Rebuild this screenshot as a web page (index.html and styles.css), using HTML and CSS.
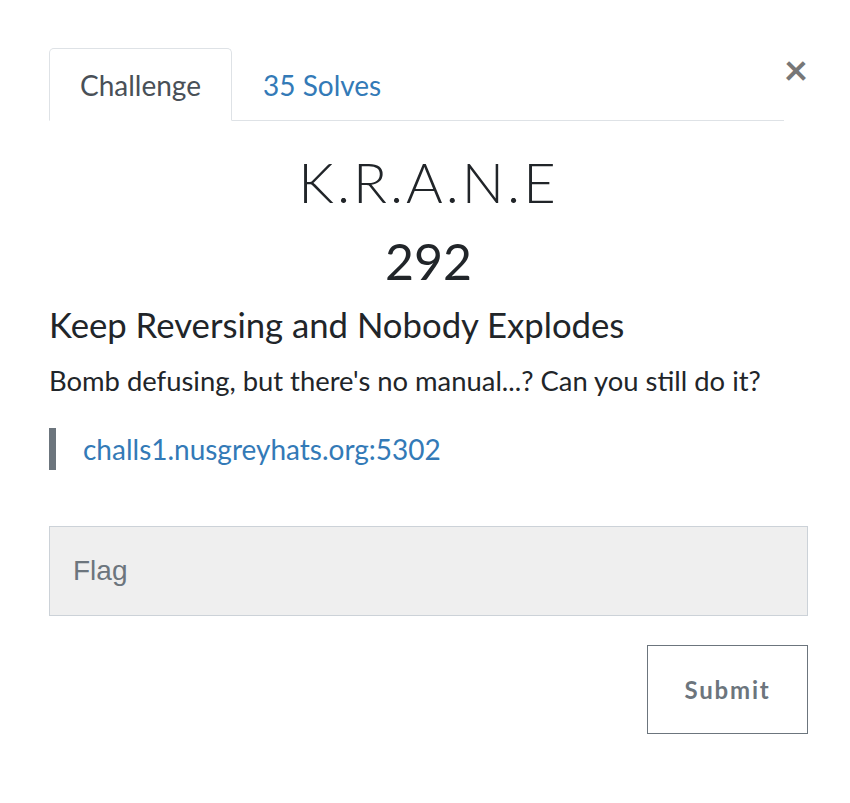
FILE: index.html
```html
<!DOCTYPE html>
<html>
<head>
<meta charset="utf-8">
<link rel="stylesheet" href="styles.css">
</head>
<body>
<div class="modal">
  <div class="tab-row">
    <ul class="tabs">
      <li class="tab active">Challenge</li>
      <li class="tab">35 Solves</li>
    </ul>
    <button class="close" aria-label="Close">&times;</button>
  </div>
  <div class="content">
    <h2 class="title">K.R.A.N.E</h2>
    <h3 class="points">292</h3>
    <h4 class="subtitle">Keep Reversing and Nobody Explodes</h4>
    <p class="desc">Bomb defusing, but there's no manual...? Can you still do it?</p>
    <blockquote class="quote"><a class="link" href="#">challs1.nusgreyhats.org:5302</a></blockquote>
    <input class="flag" type="text" placeholder="Flag">
    <div class="actions"><button class="submit">Submit</button></div>
  </div>
</div>
</body>
</html>
```
FILE: styles.css
```css
* { box-sizing: border-box; }
html, body { margin: 0; padding: 0; background: #fff; }
body { font-family: Lato, "Open Sans", sans-serif; color: #212529; }
.modal { padding: 48px 42px 0 49px; }
.tab-row { display: flex; align-items: flex-start; }
.tabs {
  list-style: none; margin: 0; padding: 0;
  display: flex; width: 735px;
  border-bottom: 1px solid #dee2e6;
}
.tab {
  font-size: 28px; line-height: 36px;
  padding: 18px 30px 17px;
  color: #337ab7;
  border: 1px solid transparent;
  border-top-left-radius: 5px; border-top-right-radius: 5px;
  margin-bottom: -1px;
}
.tab.active {
  color: #495057;
  border-color: #dee2e6 #dee2e6 #fff;
  background: #fff;
}
.close {
  margin-left: auto; border: 0; background: none; padding: 0;
  font-family: Lato, sans-serif; font-weight: 700;
  font-size: 42px; line-height: 1; color: #777;
  margin-top: 0;
}
.content { text-align: left; }
.title {
  text-align: center; font-weight: 300; font-size: 56px;
  letter-spacing: 3px;
  margin: 27px 0 0; line-height: 1.2;
}
.points {
  text-align: center; font-weight: 400; font-size: 50px;
  margin: 16px 0 0; line-height: 1.2;
}
.subtitle {
  font-weight: 400; font-size: 34.7px; margin: 13px 0 0; line-height: 1.2;
}
.desc { font-size: 27.4px; margin: 14px 0 0; line-height: 1.5; }
.quote {
  margin: 27px 0 0; padding: 0 0 0 27px;
  border-left: 7px solid #6c757d;
  font-size: 28px; line-height: 42px;
}
.link { color: #337ab7; text-decoration: none; }
.flag {
  display: block; width: 100%; height: 90px; margin-top: 56px;
  background: #efefef; border: 1px solid #ccd2d8;
  padding: 0 23px;
  font-family: "Liberation Sans", Arial, sans-serif; font-size: 28px;
  color: #495057;
}
.flag::placeholder { color: #6c757d; }
.actions { display: flex; justify-content: flex-end; margin-top: 29px; }
.submit {
  width: 161px; height: 89px; background: #fff;
  border: 1px solid #6c757d;
  font-family: Lato, sans-serif; font-weight: 700; font-size: 24px;
  letter-spacing: 1.8px; color: #6c757d;
}
```
